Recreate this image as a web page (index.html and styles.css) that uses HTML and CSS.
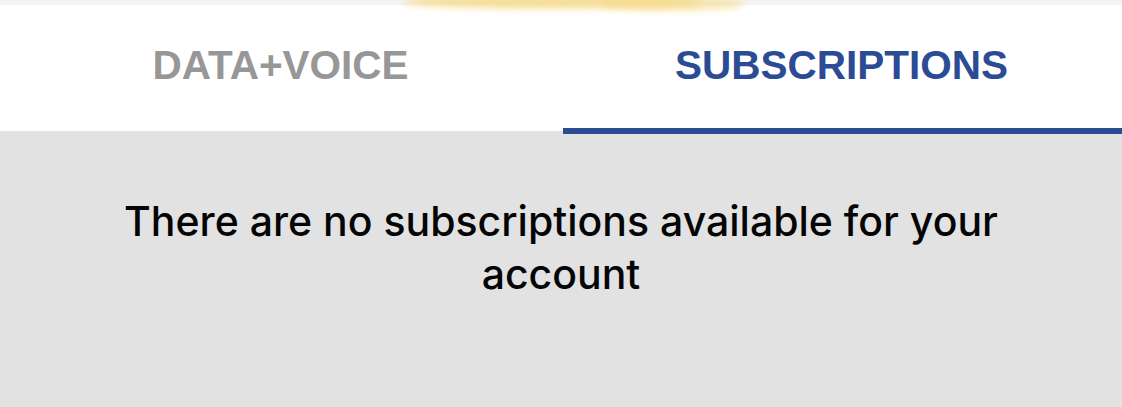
FILE: index.html
```html
<!DOCTYPE html>
<html lang="en">
<head>
    <meta charset="UTF-8">
    <meta name="viewport" content="width=device-width, initial-scale=1.0">
    <title>Subscriptions</title>
    <link rel="stylesheet" href="styles.css">
</head>
<body>
    <div class="status-strip">
        <div class="smudge"></div>
        <div class="smudge smudge-tail"></div>
    </div>

    <div class="tabs">
        <div class="tab">DATA+VOICE</div>
        <div class="tab active">SUBSCRIPTIONS</div>
    </div>

    <div class="content">
        <p class="empty">There are no subscriptions available for your account</p>
    </div>
</body>
</html>
```

FILE: styles.css
```css
html, body { margin: 0; padding: 0; }
body { background: #e2e2e3; font-family: "Liberation Sans", Arial, sans-serif; width: 1122px; height: 407px; overflow: hidden; }

.status-strip { position: relative; height: 5px; background: #f4f4f4; }
.smudge { position: absolute; left: 402px; top: -5px; width: 300px; height: 14px; border-radius: 50%; background: #f6d985; filter: blur(3px); opacity: 0.8; z-index: 2; }
.smudge-tail { left: 600px; top: -3px; width: 145px; height: 14px; opacity: 0.6; }

.tabs { display: flex; height: 126px; background: #fff; }
.tab { position: relative; flex: 1; display: flex; align-items: center; justify-content: center; padding-bottom: 6px; font-size: 40.5px; font-weight: bold; color: #979797; }
.tab.active { color: #2b4b95; }
.tab.active::after { content: ""; position: absolute; left: 2px; right: 0; bottom: -3px; height: 6px; background: #2b4b95; }

.content { padding: 64px 40px 0; text-align: center; }
.empty { margin: 0 auto; max-width: 900px; font-family: Inter, "Liberation Sans", sans-serif; font-size: 41px; font-weight: 550; line-height: 53px; color: #050505; }
```
